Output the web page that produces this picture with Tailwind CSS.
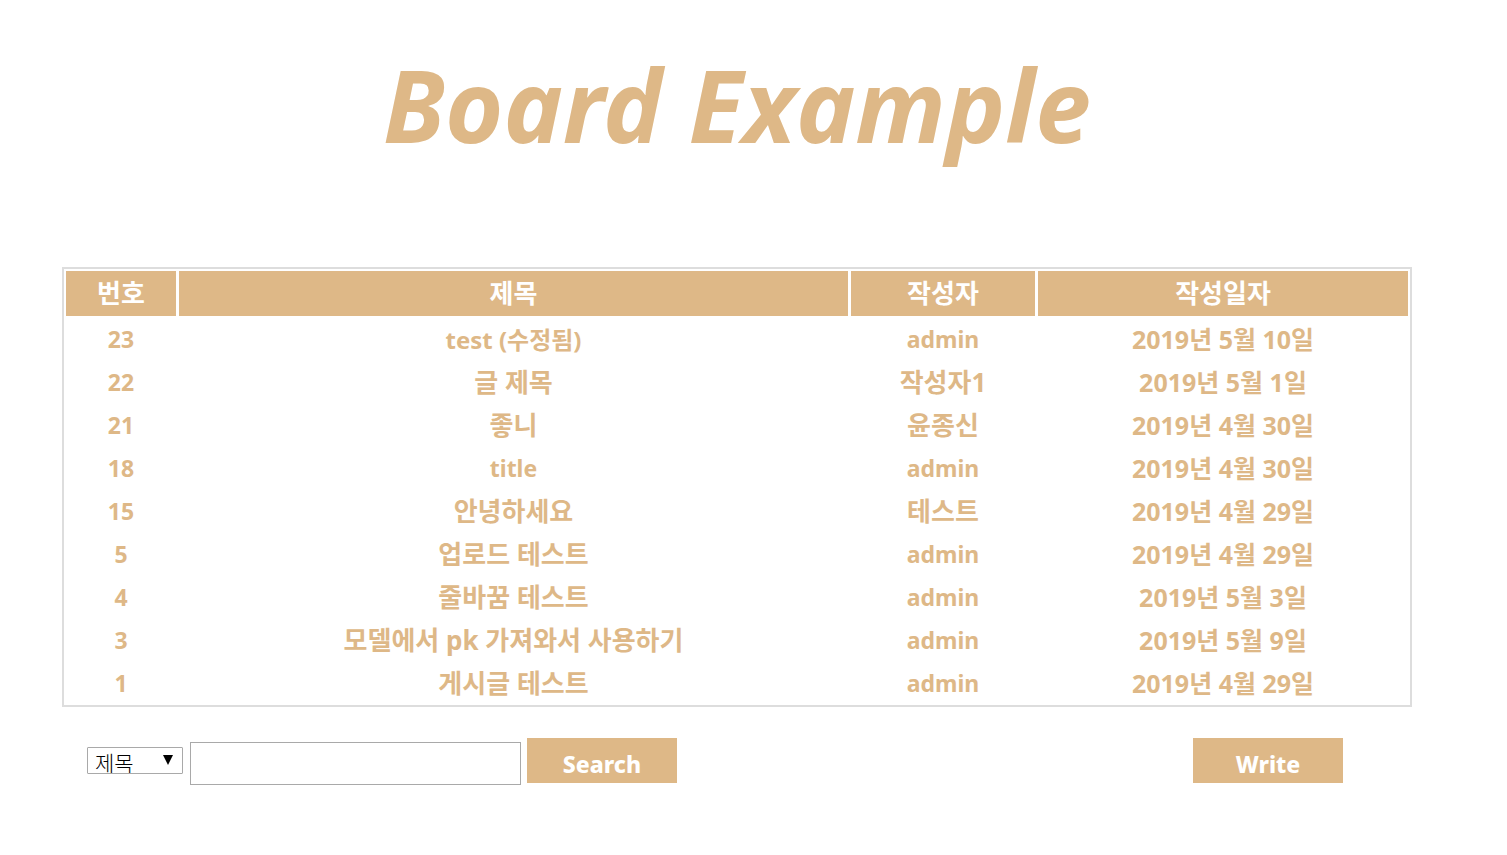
<!DOCTYPE html>
<html lang="ko">
<head>
<meta charset="utf-8">
<title>Board Example</title>
<script src="https://cdn.jsdelivr.net/npm/@tailwindcss/browser@4"></script>
</head>
<body class="bg-white text-[#deb887] font-['Noto_Sans','Noto_Sans_CJK_KR',sans-serif]">
<main class="pl-[62px] pr-[95px] pt-9">
<h1 class="text-center text-[100px] leading-[136px] font-bold italic">Board Example</h1>
<div class="mt-[95px] border-2 border-[#dddddd] px-[2px] pt-[2px]">
<table class="w-full table-fixed border-separate border-spacing-0 text-center text-[26px] leading-[43px] font-bold">
<colgroup><col class="w-[113px]"><col><col class="w-[187px]"><col class="w-[370px]"></colgroup>
<thead><tr class="text-white leading-[45px]">
<th class="border-r-[3px] border-b-2 border-white bg-[#deb887]">번호</th>
<th class="border-r-[3px] border-b-2 border-white bg-[#deb887]">제목</th>
<th class="border-r-[3px] border-b-2 border-white bg-[#deb887]">작성자</th>
<th class="border-b-2 border-white bg-[#deb887]">작성일자</th></tr></thead>
<tbody>
<tr><td class="pr-[3px] text-[23px]">23</td><td class="pr-[3px] text-[24px]"><a href="#">test (수정됨)</a></td><td class="pr-[3px] text-[23px]">admin</td><td class="text-[25px]">2019년 5월 10일</td></tr>
<tr><td class="pr-[3px] text-[23px]">22</td><td class="pr-[3px]"><a href="#">글 제목</a></td><td class="pr-[3px]">작성자1</td><td class="text-[25px]">2019년 5월 1일</td></tr>
<tr><td class="pr-[3px] text-[23px]">21</td><td class="pr-[3px]"><a href="#">좋니</a></td><td class="pr-[3px]">윤종신</td><td class="text-[25px]">2019년 4월 30일</td></tr>
<tr><td class="pr-[3px] text-[23px]">18</td><td class="pr-[3px] text-[23px]"><a href="#">title</a></td><td class="pr-[3px] text-[23px]">admin</td><td class="text-[25px]">2019년 4월 30일</td></tr>
<tr><td class="pr-[3px] text-[23px]">15</td><td class="pr-[3px]"><a href="#">안녕하세요</a></td><td class="pr-[3px]">테스트</td><td class="text-[25px]">2019년 4월 29일</td></tr>
<tr><td class="pr-[3px] text-[23px]">5</td><td class="pr-[3px]"><a href="#">업로드 테스트</a></td><td class="pr-[3px] text-[23px]">admin</td><td class="text-[25px]">2019년 4월 29일</td></tr>
<tr><td class="pr-[3px] text-[23px]">4</td><td class="pr-[3px]"><a href="#">줄바꿈 테스트</a></td><td class="pr-[3px] text-[23px]">admin</td><td class="text-[25px]">2019년 5월 3일</td></tr>
<tr><td class="pr-[3px] text-[23px]">3</td><td class="pr-[3px]"><a href="#">모델에서 pk 가져와서 사용하기</a></td><td class="pr-[3px] text-[23px]">admin</td><td class="text-[25px]">2019년 5월 9일</td></tr>
<tr><td class="pr-[3px] text-[23px]">1</td><td class="pr-[3px]"><a href="#">게시글 테스트</a></td><td class="pr-[3px] text-[23px]">admin</td><td class="text-[25px]">2019년 4월 29일</td></tr>
</tbody>
</table>
</div>
<div class="mt-[29px] flex items-center justify-between pl-[25px] pr-[69px]">
<form class="flex items-center">
<div class="relative">
<select aria-label="검색 조건" class="block h-[27px] w-24 appearance-none rounded-[1px] border border-[#a9a9a9] bg-white pt-1 pl-[7px] font-['Noto_Sans_CJK_KR',sans-serif] text-[21px] leading-[21px] font-light text-black"><option>제목</option></select>
<svg class="pointer-events-none absolute right-[10px] top-2 h-[10px] w-[10px]" viewBox="0 0 10 10" aria-hidden="true"><path d="M0 0H10L5 10Z" fill="black"/></svg>
</div>
<input type="text" aria-label="검색어" class="ml-[7px] mt-[6px] h-[43px] w-[331px] border border-[#a9a9a9] px-2 text-[20px] text-black">
<button type="button" class="ml-[6px] h-[45px] w-[150px] bg-[#deb887] pt-[7px] text-[23px] font-extrabold text-white">Search</button>
</form>
<button type="button" class="h-[45px] w-[150px] bg-[#deb887] pt-[7px] text-[23px] font-extrabold text-white">Write</button>
</div>
</main>
</body>
</html>
